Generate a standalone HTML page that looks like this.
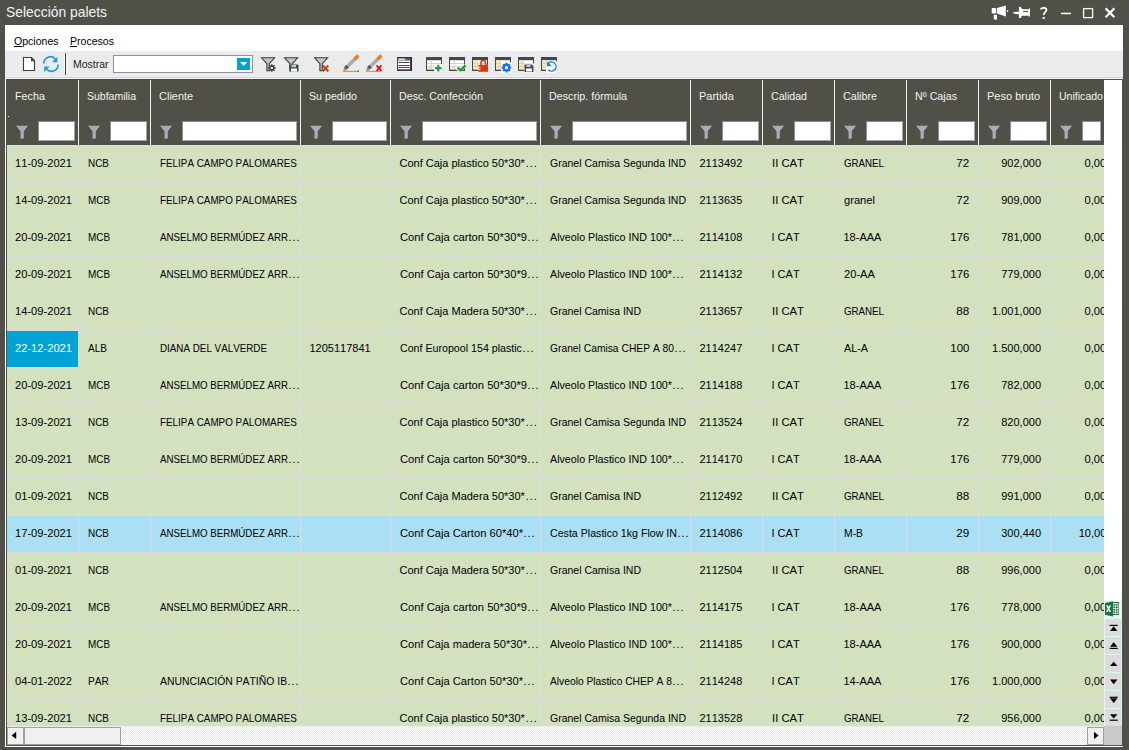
<!DOCTYPE html><html><head><meta charset="utf-8"><title>Selección palets</title><style>
*{margin:0;padding:0;box-sizing:border-box}
html,body{width:1129px;height:750px;overflow:hidden;background:#505049;font-family:"Liberation Sans",sans-serif;font-size:11px;color:#000;font-kerning:none}
.a{position:absolute}
.t{position:absolute;white-space:nowrap;line-height:13px;height:13px}
#title{left:6px;top:2px;font-size:15px;color:#f4f4f4;line-height:20px;white-space:nowrap}
#panel{left:5px;top:25px;width:1118px;height:722px;background:#fff}
.hsep{top:80px;width:1px;height:65px;background:#f2f2f2}
.htxt{color:#f2f2f2}
.tbox{top:121px;height:20px;background:#fff;border:1px solid #a6a6a6;border-top-color:#8c8c8c;border-left-color:#8c8c8c}
.row{position:absolute;left:7px;width:1097px;overflow:hidden;border-top:1px solid #dcdcdc}
.c{position:absolute;top:0;height:36px;white-space:nowrap;overflow:hidden}
.c span,.htxt span{display:inline-block}
.vs{position:absolute;top:0;width:1px;height:37px;background:#dcdcdc}
svg{position:absolute;left:0;top:0}

</style></head><body>
<div class="a" id="title"><span style="display:inline-block;transform:scaleX(0.925);transform-origin:left">Selección palets</span></div>
<div class="a" id="panel"></div>
<div class="t" style="left:13.5px;top:35px"><span style="display:inline-block;width:44.50px"><span style="display:inline-block;transform:scaleX(0.958);transform-origin:left"><u>O</u>pciones</span></span></div>
<div class="t" style="left:70px;top:35px"><span style="display:inline-block;width:44.00px"><span style="display:inline-block;transform:scaleX(0.960);transform-origin:left"><u>P</u>rocesos</span></span></div>
<div class="a" style="left:5px;top:51px;width:1118px;height:25px;background:#eaebed"></div>
<div class="a" style="left:5px;top:76px;width:1118px;height:1px;background:#eff0f1"></div>
<div class="a" style="left:5px;top:77px;width:1118px;height:1px;background:#cfcfcb"></div>
<div class="a" style="left:5px;top:78px;width:1118px;height:1px;background:#f4f5f6"></div>
<div class="a" style="left:64px;top:53px;width:3px;height:22px;background:#f8f8f8"></div>
<div class="a" style="left:65px;top:53px;width:1px;height:22px;background:#3c3c3c"></div>
<div class="t" style="left:73px;top:58px;color:#1e1e1e"><span style="display:inline-block;width:35.50px"><span style="display:inline-block;transform:scaleX(0.952);transform-origin:left">Mostrar</span></span></div>
<div class="a" style="left:113px;top:55px;width:140px;height:18px;background:#fff;border:1px solid #8f909c"></div>
<div class="a" style="left:237px;top:58px;width:13px;height:12px;background:#00a3d3"></div>
<div class="a" style="left:6px;top:79px;width:1117px;height:667px;background:#505049"></div>
<div class="a" style="left:6px;top:79px;width:1098px;height:66px;background:#505048"></div>
<div class="a" style="left:6px;top:79px;width:1098px;height:1px;background:#46463f"></div>
<div class="a" style="left:1104px;top:80px;width:18px;height:646px;background:#fff"></div>
<div class="a" style="left:8px;top:116px;width:1px;height:1px;background:#e8e8e8"></div>
<div class="t htxt" style="left:15px;top:90px"><span style="display:inline-block;width:30.00px"><span style="display:inline-block;transform:scaleX(0.981);transform-origin:left">Fecha</span></span></div>
<div class="a tbox" style="left:38px;width:37px"></div>
<div class="a hsep" style="left:78px"></div>
<div class="t htxt" style="left:87px;top:90px"><span style="display:inline-block;width:49.00px"><span style="display:inline-block;transform:scaleX(0.954);transform-origin:left">Subfamilia</span></span></div>
<div class="a tbox" style="left:110px;width:37px"></div>
<div class="a hsep" style="left:150px"></div>
<div class="t htxt" style="left:159px;top:90px">Cliente</div>
<div class="a tbox" style="left:182px;width:115px"></div>
<div class="a hsep" style="left:300px"></div>
<div class="t htxt" style="left:309px;top:90px"><span style="display:inline-block;width:48.00px"><span style="display:inline-block;transform:scaleX(0.969);transform-origin:left">Su pedido</span></span></div>
<div class="a tbox" style="left:332px;width:55px"></div>
<div class="a hsep" style="left:390px"></div>
<div class="t htxt" style="left:399px;top:90px"><span style="display:inline-block;width:84.00px"><span style="display:inline-block;transform:scaleX(0.974);transform-origin:left">Desc. Confección</span></span></div>
<div class="a tbox" style="left:422px;width:115px"></div>
<div class="a hsep" style="left:540px"></div>
<div class="t htxt" style="left:549px;top:90px"><span style="display:inline-block;width:78.00px"><span style="display:inline-block;transform:scaleX(0.974);transform-origin:left">Descrip. fórmula</span></span></div>
<div class="a tbox" style="left:572px;width:115px"></div>
<div class="a hsep" style="left:690px"></div>
<div class="t htxt" style="left:699px;top:90px">Partida</div>
<div class="a tbox" style="left:722px;width:37px"></div>
<div class="a hsep" style="left:762px"></div>
<div class="t htxt" style="left:771px;top:90px"><span style="display:inline-block;width:36.00px"><span style="display:inline-block;transform:scaleX(0.965);transform-origin:left">Calidad</span></span></div>
<div class="a tbox" style="left:794px;width:37px"></div>
<div class="a hsep" style="left:834px"></div>
<div class="t htxt" style="left:843px;top:90px"><span style="display:inline-block;width:34.00px"><span style="display:inline-block;transform:scaleX(0.976);transform-origin:left">Calibre</span></span></div>
<div class="a tbox" style="left:866px;width:37px"></div>
<div class="a hsep" style="left:906px"></div>
<div class="t htxt" style="left:915px;top:90px"><span style="display:inline-block;width:42.00px"><span style="display:inline-block;transform:scaleX(0.974);transform-origin:left">Nº Cajas</span></span></div>
<div class="a tbox" style="left:938px;width:37px"></div>
<div class="a hsep" style="left:978px"></div>
<div class="t htxt" style="left:987px;top:90px">Peso bruto</div>
<div class="a tbox" style="left:1010px;width:37px"></div>
<div class="a hsep" style="left:1050px"></div>
<div class="t htxt" style="left:1059px;top:90px"><span style="display:inline-block;width:44.00px"><span style="display:inline-block;transform:scaleX(0.959);transform-origin:left">Unificado</span></span></div>
<div class="a tbox" style="left:1082px;width:19px"></div>
<div class="a" style="left:1104px;top:80px;width:18px;height:65px;background:#fff"></div>
<div class="row" style="top:145px;height:37px;background:#d3e1bf">
<div class="c" style="left:0px;width:71px;"><div class="t" style="left:8px;top:11px"><span style="display:inline-block;width:57.00px"><span style="display:inline-block;transform:scaleX(1.013);transform-origin:left">11-09-2021</span></span></div></div>
<div class="vs" style="left:71px"></div>
<div class="c" style="left:72px;width:71px;"><div class="t" style="left:8.5px;top:11px"><span style="display:inline-block;width:21.00px"><span style="display:inline-block;transform:scaleX(0.904);transform-origin:left">NCB</span></span></div></div>
<div class="vs" style="left:143px"></div>
<div class="c" style="left:144px;width:149px;"><div class="t" style="left:8.5px;top:11px"><span style="display:inline-block;width:137.00px"><span style="display:inline-block;transform:scaleX(0.896);transform-origin:left">FELIPA CAMPO PALOMARES</span></span></div></div>
<div class="vs" style="left:293px"></div>
<div class="c" style="left:294px;width:89px;"></div>
<div class="vs" style="left:383px"></div>
<div class="c" style="left:384px;width:149px;"><div class="t" style="left:8.5px;top:11px">Conf Caja plastico 50*30*<span style="display:inline-block;margin-left:1px;letter-spacing:0.9px">...</span></div></div>
<div class="vs" style="left:533px"></div>
<div class="c" style="left:534px;width:149px;"><div class="t" style="left:8.5px;top:11px"><span style="display:inline-block;width:136.00px"><span style="display:inline-block;transform:scaleX(0.955);transform-origin:left">Granel Camisa Segunda IND</span></span></div></div>
<div class="vs" style="left:683px"></div>
<div class="c" style="left:684px;width:71px;"><div class="t" style="left:8.5px;top:11px">2113492</div></div>
<div class="vs" style="left:755px"></div>
<div class="c" style="left:756px;width:71px;"><div class="t" style="left:8.5px;top:11px"><span style="display:inline-block;width:32.00px"><span style="display:inline-block;transform:scaleX(1.027);transform-origin:left">II CAT</span></span></div></div>
<div class="vs" style="left:827px"></div>
<div class="c" style="left:828px;width:71px;"><div class="t" style="left:8.5px;top:11px"><span style="display:inline-block;width:40.00px"><span style="display:inline-block;transform:scaleX(0.884);transform-origin:left">GRANEL</span></span></div></div>
<div class="vs" style="left:899px"></div>
<div class="c" style="left:900px;width:71px;"><div class="t" style="right:9px;top:11px"><span style="display:inline-block;transform:scaleX(1.062);transform-origin:right">72</span></div></div>
<div class="vs" style="left:971px"></div>
<div class="c" style="left:972px;width:71px;"><div class="t" style="right:9px;top:11px">902,000</div></div>
<div class="vs" style="left:1043px"></div>
<div class="c" style="left:1044px;width:71px;"><div class="t" style="right:9px;top:11px"><span style="display:inline-block;transform:scaleX(1.017);transform-origin:right">0,000</span></div></div>
</div>
<div class="row" style="top:182px;height:37px;background:#d3e1bf">
<div class="c" style="left:0px;width:71px;"><div class="t" style="left:8px;top:11px"><span style="display:inline-block;width:57.00px"><span style="display:inline-block;transform:scaleX(1.013);transform-origin:left">14-09-2021</span></span></div></div>
<div class="vs" style="left:71px"></div>
<div class="c" style="left:72px;width:71px;"><div class="t" style="left:8.5px;top:11px"><span style="display:inline-block;width:22.00px"><span style="display:inline-block;transform:scaleX(0.900);transform-origin:left">MCB</span></span></div></div>
<div class="vs" style="left:143px"></div>
<div class="c" style="left:144px;width:149px;"><div class="t" style="left:8.5px;top:11px"><span style="display:inline-block;width:137.00px"><span style="display:inline-block;transform:scaleX(0.896);transform-origin:left">FELIPA CAMPO PALOMARES</span></span></div></div>
<div class="vs" style="left:293px"></div>
<div class="c" style="left:294px;width:89px;"></div>
<div class="vs" style="left:383px"></div>
<div class="c" style="left:384px;width:149px;"><div class="t" style="left:8.5px;top:11px">Conf Caja plastico 50*30*<span style="display:inline-block;margin-left:1px;letter-spacing:0.9px">...</span></div></div>
<div class="vs" style="left:533px"></div>
<div class="c" style="left:534px;width:149px;"><div class="t" style="left:8.5px;top:11px"><span style="display:inline-block;width:136.00px"><span style="display:inline-block;transform:scaleX(0.955);transform-origin:left">Granel Camisa Segunda IND</span></span></div></div>
<div class="vs" style="left:683px"></div>
<div class="c" style="left:684px;width:71px;"><div class="t" style="left:8.5px;top:11px">2113635</div></div>
<div class="vs" style="left:755px"></div>
<div class="c" style="left:756px;width:71px;"><div class="t" style="left:8.5px;top:11px"><span style="display:inline-block;width:32.00px"><span style="display:inline-block;transform:scaleX(1.027);transform-origin:left">II CAT</span></span></div></div>
<div class="vs" style="left:827px"></div>
<div class="c" style="left:828px;width:71px;"><div class="t" style="left:8.5px;top:11px"><span style="display:inline-block;width:31.00px"><span style="display:inline-block;transform:scaleX(1.014);transform-origin:left">granel</span></span></div></div>
<div class="vs" style="left:899px"></div>
<div class="c" style="left:900px;width:71px;"><div class="t" style="right:9px;top:11px"><span style="display:inline-block;transform:scaleX(1.062);transform-origin:right">72</span></div></div>
<div class="vs" style="left:971px"></div>
<div class="c" style="left:972px;width:71px;"><div class="t" style="right:9px;top:11px">909,000</div></div>
<div class="vs" style="left:1043px"></div>
<div class="c" style="left:1044px;width:71px;"><div class="t" style="right:9px;top:11px"><span style="display:inline-block;transform:scaleX(1.017);transform-origin:right">0,000</span></div></div>
</div>
<div class="row" style="top:219px;height:37px;background:#d3e1bf">
<div class="c" style="left:0px;width:71px;"><div class="t" style="left:8px;top:11px"><span style="display:inline-block;width:57.00px"><span style="display:inline-block;transform:scaleX(1.013);transform-origin:left">20-09-2021</span></span></div></div>
<div class="vs" style="left:71px"></div>
<div class="c" style="left:72px;width:71px;"><div class="t" style="left:8.5px;top:11px"><span style="display:inline-block;width:22.00px"><span style="display:inline-block;transform:scaleX(0.900);transform-origin:left">MCB</span></span></div></div>
<div class="vs" style="left:143px"></div>
<div class="c" style="left:144px;width:149px;"><div class="t" style="left:8.5px;top:11px"><span style="display:inline-block;width:128.00px"><span style="display:inline-block;transform:scaleX(0.884);transform-origin:left">ANSELMO BERMÚDEZ ARR</span></span><span style="display:inline-block;margin-left:1px;letter-spacing:0.9px">...</span></div></div>
<div class="vs" style="left:293px"></div>
<div class="c" style="left:294px;width:89px;"></div>
<div class="vs" style="left:383px"></div>
<div class="c" style="left:384px;width:149px;"><div class="t" style="left:8.5px;top:11px"><span style="display:inline-block;width:127.00px"><span style="display:inline-block;transform:scaleX(1.018);transform-origin:left">Conf Caja carton 50*30*9</span></span><span style="display:inline-block;margin-left:1px;letter-spacing:0.9px">...</span></div></div>
<div class="vs" style="left:533px"></div>
<div class="c" style="left:534px;width:149px;"><div class="t" style="left:8.5px;top:11px"><span style="display:inline-block;width:122.00px"><span style="display:inline-block;transform:scaleX(0.973);transform-origin:left">Alveolo Plastico IND 100*</span></span><span style="display:inline-block;margin-left:1px;letter-spacing:0.9px">...</span></div></div>
<div class="vs" style="left:683px"></div>
<div class="c" style="left:684px;width:71px;"><div class="t" style="left:8.5px;top:11px">2114108</div></div>
<div class="vs" style="left:755px"></div>
<div class="c" style="left:756px;width:71px;"><div class="t" style="left:8.5px;top:11px">I CAT</div></div>
<div class="vs" style="left:827px"></div>
<div class="c" style="left:828px;width:71px;"><div class="t" style="left:8.5px;top:11px">18-AAA</div></div>
<div class="vs" style="left:899px"></div>
<div class="c" style="left:900px;width:71px;"><div class="t" style="right:9px;top:11px"><span style="display:inline-block;transform:scaleX(1.035);transform-origin:right">176</span></div></div>
<div class="vs" style="left:971px"></div>
<div class="c" style="left:972px;width:71px;"><div class="t" style="right:9px;top:11px">781,000</div></div>
<div class="vs" style="left:1043px"></div>
<div class="c" style="left:1044px;width:71px;"><div class="t" style="right:9px;top:11px"><span style="display:inline-block;transform:scaleX(1.017);transform-origin:right">0,000</span></div></div>
</div>
<div class="row" style="top:256px;height:37px;background:#d3e1bf">
<div class="c" style="left:0px;width:71px;"><div class="t" style="left:8px;top:11px"><span style="display:inline-block;width:57.00px"><span style="display:inline-block;transform:scaleX(1.013);transform-origin:left">20-09-2021</span></span></div></div>
<div class="vs" style="left:71px"></div>
<div class="c" style="left:72px;width:71px;"><div class="t" style="left:8.5px;top:11px"><span style="display:inline-block;width:22.00px"><span style="display:inline-block;transform:scaleX(0.900);transform-origin:left">MCB</span></span></div></div>
<div class="vs" style="left:143px"></div>
<div class="c" style="left:144px;width:149px;"><div class="t" style="left:8.5px;top:11px"><span style="display:inline-block;width:128.00px"><span style="display:inline-block;transform:scaleX(0.884);transform-origin:left">ANSELMO BERMÚDEZ ARR</span></span><span style="display:inline-block;margin-left:1px;letter-spacing:0.9px">...</span></div></div>
<div class="vs" style="left:293px"></div>
<div class="c" style="left:294px;width:89px;"></div>
<div class="vs" style="left:383px"></div>
<div class="c" style="left:384px;width:149px;"><div class="t" style="left:8.5px;top:11px"><span style="display:inline-block;width:127.00px"><span style="display:inline-block;transform:scaleX(1.018);transform-origin:left">Conf Caja carton 50*30*9</span></span><span style="display:inline-block;margin-left:1px;letter-spacing:0.9px">...</span></div></div>
<div class="vs" style="left:533px"></div>
<div class="c" style="left:534px;width:149px;"><div class="t" style="left:8.5px;top:11px"><span style="display:inline-block;width:122.00px"><span style="display:inline-block;transform:scaleX(0.973);transform-origin:left">Alveolo Plastico IND 100*</span></span><span style="display:inline-block;margin-left:1px;letter-spacing:0.9px">...</span></div></div>
<div class="vs" style="left:683px"></div>
<div class="c" style="left:684px;width:71px;"><div class="t" style="left:8.5px;top:11px">2114132</div></div>
<div class="vs" style="left:755px"></div>
<div class="c" style="left:756px;width:71px;"><div class="t" style="left:8.5px;top:11px">I CAT</div></div>
<div class="vs" style="left:827px"></div>
<div class="c" style="left:828px;width:71px;"><div class="t" style="left:8.5px;top:11px"><span style="display:inline-block;width:31.00px"><span style="display:inline-block;transform:scaleX(1.014);transform-origin:left">20-AA</span></span></div></div>
<div class="vs" style="left:899px"></div>
<div class="c" style="left:900px;width:71px;"><div class="t" style="right:9px;top:11px"><span style="display:inline-block;transform:scaleX(1.035);transform-origin:right">176</span></div></div>
<div class="vs" style="left:971px"></div>
<div class="c" style="left:972px;width:71px;"><div class="t" style="right:9px;top:11px">779,000</div></div>
<div class="vs" style="left:1043px"></div>
<div class="c" style="left:1044px;width:71px;"><div class="t" style="right:9px;top:11px"><span style="display:inline-block;transform:scaleX(1.017);transform-origin:right">0,000</span></div></div>
</div>
<div class="row" style="top:293px;height:37px;background:#d3e1bf">
<div class="c" style="left:0px;width:71px;"><div class="t" style="left:8px;top:11px"><span style="display:inline-block;width:57.00px"><span style="display:inline-block;transform:scaleX(1.013);transform-origin:left">14-09-2021</span></span></div></div>
<div class="vs" style="left:71px"></div>
<div class="c" style="left:72px;width:71px;"><div class="t" style="left:8.5px;top:11px"><span style="display:inline-block;width:21.00px"><span style="display:inline-block;transform:scaleX(0.904);transform-origin:left">NCB</span></span></div></div>
<div class="vs" style="left:143px"></div>
<div class="c" style="left:144px;width:149px;"></div>
<div class="vs" style="left:293px"></div>
<div class="c" style="left:294px;width:89px;"></div>
<div class="vs" style="left:383px"></div>
<div class="c" style="left:384px;width:149px;"><div class="t" style="left:8.5px;top:11px">Conf Caja Madera 50*30*<span style="display:inline-block;margin-left:1px;letter-spacing:0.9px">...</span></div></div>
<div class="vs" style="left:533px"></div>
<div class="c" style="left:534px;width:149px;"><div class="t" style="left:8.5px;top:11px"><span style="display:inline-block;width:91.00px"><span style="display:inline-block;transform:scaleX(0.954);transform-origin:left">Granel Camisa IND</span></span></div></div>
<div class="vs" style="left:683px"></div>
<div class="c" style="left:684px;width:71px;"><div class="t" style="left:8.5px;top:11px">2113657</div></div>
<div class="vs" style="left:755px"></div>
<div class="c" style="left:756px;width:71px;"><div class="t" style="left:8.5px;top:11px"><span style="display:inline-block;width:32.00px"><span style="display:inline-block;transform:scaleX(1.027);transform-origin:left">II CAT</span></span></div></div>
<div class="vs" style="left:827px"></div>
<div class="c" style="left:828px;width:71px;"><div class="t" style="left:8.5px;top:11px"><span style="display:inline-block;width:40.00px"><span style="display:inline-block;transform:scaleX(0.884);transform-origin:left">GRANEL</span></span></div></div>
<div class="vs" style="left:899px"></div>
<div class="c" style="left:900px;width:71px;"><div class="t" style="right:9px;top:11px"><span style="display:inline-block;transform:scaleX(1.062);transform-origin:right">88</span></div></div>
<div class="vs" style="left:971px"></div>
<div class="c" style="left:972px;width:71px;"><div class="t" style="right:9px;top:11px">1.001,000</div></div>
<div class="vs" style="left:1043px"></div>
<div class="c" style="left:1044px;width:71px;"><div class="t" style="right:9px;top:11px"><span style="display:inline-block;transform:scaleX(1.017);transform-origin:right">0,000</span></div></div>
</div>
<div class="row" style="top:330px;height:37px;background:#d3e1bf">
<div class="c" style="left:0px;width:71px;background:#00a3d3;color:#fff;"><div class="t" style="left:8px;top:11px"><span style="display:inline-block;width:57.00px"><span style="display:inline-block;transform:scaleX(1.013);transform-origin:left">22-12-2021</span></span></div></div>
<div class="vs" style="left:71px"></div>
<div class="c" style="left:72px;width:71px;"><div class="t" style="left:8.5px;top:11px"><span style="display:inline-block;width:19.00px"><span style="display:inline-block;transform:scaleX(0.914);transform-origin:left">ALB</span></span></div></div>
<div class="vs" style="left:143px"></div>
<div class="c" style="left:144px;width:149px;"><div class="t" style="left:8.5px;top:11px"><span style="display:inline-block;width:107.00px"><span style="display:inline-block;transform:scaleX(0.893);transform-origin:left">DIANA DEL VALVERDE</span></span></div></div>
<div class="vs" style="left:293px"></div>
<div class="c" style="left:294px;width:89px;"><div class="t" style="left:8.5px;top:11px">1205117841</div></div>
<div class="vs" style="left:383px"></div>
<div class="c" style="left:384px;width:149px;"><div class="t" style="left:8.5px;top:11px"><span style="display:inline-block;width:122.00px"><span style="display:inline-block;transform:scaleX(0.968);transform-origin:left">Conf Europool 154 plastic</span></span><span style="display:inline-block;margin-left:1px;letter-spacing:0.9px">...</span></div></div>
<div class="vs" style="left:533px"></div>
<div class="c" style="left:534px;width:149px;"><div class="t" style="left:8.5px;top:11px"><span style="display:inline-block;width:124.00px"><span style="display:inline-block;transform:scaleX(0.935);transform-origin:left">Granel Camisa CHEP A 80</span></span><span style="display:inline-block;margin-left:1px;letter-spacing:0.9px">...</span></div></div>
<div class="vs" style="left:683px"></div>
<div class="c" style="left:684px;width:71px;"><div class="t" style="left:8.5px;top:11px">2114247</div></div>
<div class="vs" style="left:755px"></div>
<div class="c" style="left:756px;width:71px;"><div class="t" style="left:8.5px;top:11px">I CAT</div></div>
<div class="vs" style="left:827px"></div>
<div class="c" style="left:828px;width:71px;"><div class="t" style="left:8.5px;top:11px"><span style="display:inline-block;width:24.00px"><span style="display:inline-block;transform:scaleX(0.981);transform-origin:left">AL-A</span></span></div></div>
<div class="vs" style="left:899px"></div>
<div class="c" style="left:900px;width:71px;"><div class="t" style="right:9px;top:11px"><span style="display:inline-block;transform:scaleX(1.035);transform-origin:right">100</span></div></div>
<div class="vs" style="left:971px"></div>
<div class="c" style="left:972px;width:71px;"><div class="t" style="right:9px;top:11px">1.500,000</div></div>
<div class="vs" style="left:1043px"></div>
<div class="c" style="left:1044px;width:71px;"><div class="t" style="right:9px;top:11px"><span style="display:inline-block;transform:scaleX(1.017);transform-origin:right">0,000</span></div></div>
</div>
<div class="row" style="top:367px;height:37px;background:#d3e1bf">
<div class="c" style="left:0px;width:71px;"><div class="t" style="left:8px;top:11px"><span style="display:inline-block;width:57.00px"><span style="display:inline-block;transform:scaleX(1.013);transform-origin:left">20-09-2021</span></span></div></div>
<div class="vs" style="left:71px"></div>
<div class="c" style="left:72px;width:71px;"><div class="t" style="left:8.5px;top:11px"><span style="display:inline-block;width:22.00px"><span style="display:inline-block;transform:scaleX(0.900);transform-origin:left">MCB</span></span></div></div>
<div class="vs" style="left:143px"></div>
<div class="c" style="left:144px;width:149px;"><div class="t" style="left:8.5px;top:11px"><span style="display:inline-block;width:128.00px"><span style="display:inline-block;transform:scaleX(0.884);transform-origin:left">ANSELMO BERMÚDEZ ARR</span></span><span style="display:inline-block;margin-left:1px;letter-spacing:0.9px">...</span></div></div>
<div class="vs" style="left:293px"></div>
<div class="c" style="left:294px;width:89px;"></div>
<div class="vs" style="left:383px"></div>
<div class="c" style="left:384px;width:149px;"><div class="t" style="left:8.5px;top:11px"><span style="display:inline-block;width:127.00px"><span style="display:inline-block;transform:scaleX(1.018);transform-origin:left">Conf Caja carton 50*30*9</span></span><span style="display:inline-block;margin-left:1px;letter-spacing:0.9px">...</span></div></div>
<div class="vs" style="left:533px"></div>
<div class="c" style="left:534px;width:149px;"><div class="t" style="left:8.5px;top:11px"><span style="display:inline-block;width:122.00px"><span style="display:inline-block;transform:scaleX(0.973);transform-origin:left">Alveolo Plastico IND 100*</span></span><span style="display:inline-block;margin-left:1px;letter-spacing:0.9px">...</span></div></div>
<div class="vs" style="left:683px"></div>
<div class="c" style="left:684px;width:71px;"><div class="t" style="left:8.5px;top:11px">2114188</div></div>
<div class="vs" style="left:755px"></div>
<div class="c" style="left:756px;width:71px;"><div class="t" style="left:8.5px;top:11px">I CAT</div></div>
<div class="vs" style="left:827px"></div>
<div class="c" style="left:828px;width:71px;"><div class="t" style="left:8.5px;top:11px">18-AAA</div></div>
<div class="vs" style="left:899px"></div>
<div class="c" style="left:900px;width:71px;"><div class="t" style="right:9px;top:11px"><span style="display:inline-block;transform:scaleX(1.035);transform-origin:right">176</span></div></div>
<div class="vs" style="left:971px"></div>
<div class="c" style="left:972px;width:71px;"><div class="t" style="right:9px;top:11px">782,000</div></div>
<div class="vs" style="left:1043px"></div>
<div class="c" style="left:1044px;width:71px;"><div class="t" style="right:9px;top:11px"><span style="display:inline-block;transform:scaleX(1.017);transform-origin:right">0,000</span></div></div>
</div>
<div class="row" style="top:404px;height:37px;background:#d3e1bf">
<div class="c" style="left:0px;width:71px;"><div class="t" style="left:8px;top:11px"><span style="display:inline-block;width:57.00px"><span style="display:inline-block;transform:scaleX(1.013);transform-origin:left">13-09-2021</span></span></div></div>
<div class="vs" style="left:71px"></div>
<div class="c" style="left:72px;width:71px;"><div class="t" style="left:8.5px;top:11px"><span style="display:inline-block;width:21.00px"><span style="display:inline-block;transform:scaleX(0.904);transform-origin:left">NCB</span></span></div></div>
<div class="vs" style="left:143px"></div>
<div class="c" style="left:144px;width:149px;"><div class="t" style="left:8.5px;top:11px"><span style="display:inline-block;width:137.00px"><span style="display:inline-block;transform:scaleX(0.896);transform-origin:left">FELIPA CAMPO PALOMARES</span></span></div></div>
<div class="vs" style="left:293px"></div>
<div class="c" style="left:294px;width:89px;"></div>
<div class="vs" style="left:383px"></div>
<div class="c" style="left:384px;width:149px;"><div class="t" style="left:8.5px;top:11px">Conf Caja plastico 50*30*<span style="display:inline-block;margin-left:1px;letter-spacing:0.9px">...</span></div></div>
<div class="vs" style="left:533px"></div>
<div class="c" style="left:534px;width:149px;"><div class="t" style="left:8.5px;top:11px"><span style="display:inline-block;width:136.00px"><span style="display:inline-block;transform:scaleX(0.955);transform-origin:left">Granel Camisa Segunda IND</span></span></div></div>
<div class="vs" style="left:683px"></div>
<div class="c" style="left:684px;width:71px;"><div class="t" style="left:8.5px;top:11px">2113524</div></div>
<div class="vs" style="left:755px"></div>
<div class="c" style="left:756px;width:71px;"><div class="t" style="left:8.5px;top:11px"><span style="display:inline-block;width:32.00px"><span style="display:inline-block;transform:scaleX(1.027);transform-origin:left">II CAT</span></span></div></div>
<div class="vs" style="left:827px"></div>
<div class="c" style="left:828px;width:71px;"><div class="t" style="left:8.5px;top:11px"><span style="display:inline-block;width:40.00px"><span style="display:inline-block;transform:scaleX(0.884);transform-origin:left">GRANEL</span></span></div></div>
<div class="vs" style="left:899px"></div>
<div class="c" style="left:900px;width:71px;"><div class="t" style="right:9px;top:11px"><span style="display:inline-block;transform:scaleX(1.062);transform-origin:right">72</span></div></div>
<div class="vs" style="left:971px"></div>
<div class="c" style="left:972px;width:71px;"><div class="t" style="right:9px;top:11px">820,000</div></div>
<div class="vs" style="left:1043px"></div>
<div class="c" style="left:1044px;width:71px;"><div class="t" style="right:9px;top:11px"><span style="display:inline-block;transform:scaleX(1.017);transform-origin:right">0,000</span></div></div>
</div>
<div class="row" style="top:441px;height:37px;background:#d3e1bf">
<div class="c" style="left:0px;width:71px;"><div class="t" style="left:8px;top:11px"><span style="display:inline-block;width:57.00px"><span style="display:inline-block;transform:scaleX(1.013);transform-origin:left">20-09-2021</span></span></div></div>
<div class="vs" style="left:71px"></div>
<div class="c" style="left:72px;width:71px;"><div class="t" style="left:8.5px;top:11px"><span style="display:inline-block;width:22.00px"><span style="display:inline-block;transform:scaleX(0.900);transform-origin:left">MCB</span></span></div></div>
<div class="vs" style="left:143px"></div>
<div class="c" style="left:144px;width:149px;"><div class="t" style="left:8.5px;top:11px"><span style="display:inline-block;width:128.00px"><span style="display:inline-block;transform:scaleX(0.884);transform-origin:left">ANSELMO BERMÚDEZ ARR</span></span><span style="display:inline-block;margin-left:1px;letter-spacing:0.9px">...</span></div></div>
<div class="vs" style="left:293px"></div>
<div class="c" style="left:294px;width:89px;"></div>
<div class="vs" style="left:383px"></div>
<div class="c" style="left:384px;width:149px;"><div class="t" style="left:8.5px;top:11px"><span style="display:inline-block;width:127.00px"><span style="display:inline-block;transform:scaleX(1.018);transform-origin:left">Conf Caja carton 50*30*9</span></span><span style="display:inline-block;margin-left:1px;letter-spacing:0.9px">...</span></div></div>
<div class="vs" style="left:533px"></div>
<div class="c" style="left:534px;width:149px;"><div class="t" style="left:8.5px;top:11px"><span style="display:inline-block;width:122.00px"><span style="display:inline-block;transform:scaleX(0.973);transform-origin:left">Alveolo Plastico IND 100*</span></span><span style="display:inline-block;margin-left:1px;letter-spacing:0.9px">...</span></div></div>
<div class="vs" style="left:683px"></div>
<div class="c" style="left:684px;width:71px;"><div class="t" style="left:8.5px;top:11px">2114170</div></div>
<div class="vs" style="left:755px"></div>
<div class="c" style="left:756px;width:71px;"><div class="t" style="left:8.5px;top:11px">I CAT</div></div>
<div class="vs" style="left:827px"></div>
<div class="c" style="left:828px;width:71px;"><div class="t" style="left:8.5px;top:11px">18-AAA</div></div>
<div class="vs" style="left:899px"></div>
<div class="c" style="left:900px;width:71px;"><div class="t" style="right:9px;top:11px"><span style="display:inline-block;transform:scaleX(1.035);transform-origin:right">176</span></div></div>
<div class="vs" style="left:971px"></div>
<div class="c" style="left:972px;width:71px;"><div class="t" style="right:9px;top:11px">779,000</div></div>
<div class="vs" style="left:1043px"></div>
<div class="c" style="left:1044px;width:71px;"><div class="t" style="right:9px;top:11px"><span style="display:inline-block;transform:scaleX(1.017);transform-origin:right">0,000</span></div></div>
</div>
<div class="row" style="top:478px;height:37px;background:#d3e1bf">
<div class="c" style="left:0px;width:71px;"><div class="t" style="left:8px;top:11px"><span style="display:inline-block;width:57.00px"><span style="display:inline-block;transform:scaleX(1.013);transform-origin:left">01-09-2021</span></span></div></div>
<div class="vs" style="left:71px"></div>
<div class="c" style="left:72px;width:71px;"><div class="t" style="left:8.5px;top:11px"><span style="display:inline-block;width:21.00px"><span style="display:inline-block;transform:scaleX(0.904);transform-origin:left">NCB</span></span></div></div>
<div class="vs" style="left:143px"></div>
<div class="c" style="left:144px;width:149px;"></div>
<div class="vs" style="left:293px"></div>
<div class="c" style="left:294px;width:89px;"></div>
<div class="vs" style="left:383px"></div>
<div class="c" style="left:384px;width:149px;"><div class="t" style="left:8.5px;top:11px">Conf Caja Madera 50*30*<span style="display:inline-block;margin-left:1px;letter-spacing:0.9px">...</span></div></div>
<div class="vs" style="left:533px"></div>
<div class="c" style="left:534px;width:149px;"><div class="t" style="left:8.5px;top:11px"><span style="display:inline-block;width:91.00px"><span style="display:inline-block;transform:scaleX(0.954);transform-origin:left">Granel Camisa IND</span></span></div></div>
<div class="vs" style="left:683px"></div>
<div class="c" style="left:684px;width:71px;"><div class="t" style="left:8.5px;top:11px">2112492</div></div>
<div class="vs" style="left:755px"></div>
<div class="c" style="left:756px;width:71px;"><div class="t" style="left:8.5px;top:11px"><span style="display:inline-block;width:32.00px"><span style="display:inline-block;transform:scaleX(1.027);transform-origin:left">II CAT</span></span></div></div>
<div class="vs" style="left:827px"></div>
<div class="c" style="left:828px;width:71px;"><div class="t" style="left:8.5px;top:11px"><span style="display:inline-block;width:40.00px"><span style="display:inline-block;transform:scaleX(0.884);transform-origin:left">GRANEL</span></span></div></div>
<div class="vs" style="left:899px"></div>
<div class="c" style="left:900px;width:71px;"><div class="t" style="right:9px;top:11px"><span style="display:inline-block;transform:scaleX(1.062);transform-origin:right">88</span></div></div>
<div class="vs" style="left:971px"></div>
<div class="c" style="left:972px;width:71px;"><div class="t" style="right:9px;top:11px">991,000</div></div>
<div class="vs" style="left:1043px"></div>
<div class="c" style="left:1044px;width:71px;"><div class="t" style="right:9px;top:11px"><span style="display:inline-block;transform:scaleX(1.017);transform-origin:right">0,000</span></div></div>
</div>
<div class="row" style="top:515px;height:37px;background:#abdff3">
<div class="c" style="left:0px;width:71px;"><div class="t" style="left:8px;top:11px"><span style="display:inline-block;width:57.00px"><span style="display:inline-block;transform:scaleX(1.013);transform-origin:left">17-09-2021</span></span></div></div>
<div class="vs" style="left:71px"></div>
<div class="c" style="left:72px;width:71px;"><div class="t" style="left:8.5px;top:11px"><span style="display:inline-block;width:21.00px"><span style="display:inline-block;transform:scaleX(0.904);transform-origin:left">NCB</span></span></div></div>
<div class="vs" style="left:143px"></div>
<div class="c" style="left:144px;width:149px;"><div class="t" style="left:8.5px;top:11px"><span style="display:inline-block;width:128.00px"><span style="display:inline-block;transform:scaleX(0.884);transform-origin:left">ANSELMO BERMÚDEZ ARR</span></span><span style="display:inline-block;margin-left:1px;letter-spacing:0.9px">...</span></div></div>
<div class="vs" style="left:293px"></div>
<div class="c" style="left:294px;width:89px;"></div>
<div class="vs" style="left:383px"></div>
<div class="c" style="left:384px;width:149px;"><div class="t" style="left:8.5px;top:11px"><span style="display:inline-block;width:123.00px"><span style="display:inline-block;transform:scaleX(1.016);transform-origin:left">Conf Caja Carton 60*40*</span></span><span style="display:inline-block;margin-left:1px;letter-spacing:0.9px">...</span></div></div>
<div class="vs" style="left:533px"></div>
<div class="c" style="left:534px;width:149px;"><div class="t" style="left:8.5px;top:11px"><span style="display:inline-block;width:127.00px"><span style="display:inline-block;transform:scaleX(0.966);transform-origin:left">Cesta Plastico 1kg Flow IN</span></span><span style="display:inline-block;margin-left:1px;letter-spacing:0.9px">...</span></div></div>
<div class="vs" style="left:683px"></div>
<div class="c" style="left:684px;width:71px;"><div class="t" style="left:8.5px;top:11px">2114086</div></div>
<div class="vs" style="left:755px"></div>
<div class="c" style="left:756px;width:71px;"><div class="t" style="left:8.5px;top:11px">I CAT</div></div>
<div class="vs" style="left:827px"></div>
<div class="c" style="left:828px;width:71px;"><div class="t" style="left:8.5px;top:11px"><span style="display:inline-block;width:19.00px"><span style="display:inline-block;transform:scaleX(0.942);transform-origin:left">M-B</span></span></div></div>
<div class="vs" style="left:899px"></div>
<div class="c" style="left:900px;width:71px;"><div class="t" style="right:9px;top:11px"><span style="display:inline-block;transform:scaleX(1.062);transform-origin:right">29</span></div></div>
<div class="vs" style="left:971px"></div>
<div class="c" style="left:972px;width:71px;"><div class="t" style="right:9px;top:11px">300,440</div></div>
<div class="vs" style="left:1043px"></div>
<div class="c" style="left:1044px;width:71px;"><div class="t" style="right:9px;top:11px"><span style="display:inline-block;transform:scaleX(1.011);transform-origin:right">10,000</span></div></div>
</div>
<div class="row" style="top:552px;height:37px;background:#d3e1bf">
<div class="c" style="left:0px;width:71px;"><div class="t" style="left:8px;top:11px"><span style="display:inline-block;width:57.00px"><span style="display:inline-block;transform:scaleX(1.013);transform-origin:left">01-09-2021</span></span></div></div>
<div class="vs" style="left:71px"></div>
<div class="c" style="left:72px;width:71px;"><div class="t" style="left:8.5px;top:11px"><span style="display:inline-block;width:21.00px"><span style="display:inline-block;transform:scaleX(0.904);transform-origin:left">NCB</span></span></div></div>
<div class="vs" style="left:143px"></div>
<div class="c" style="left:144px;width:149px;"></div>
<div class="vs" style="left:293px"></div>
<div class="c" style="left:294px;width:89px;"></div>
<div class="vs" style="left:383px"></div>
<div class="c" style="left:384px;width:149px;"><div class="t" style="left:8.5px;top:11px">Conf Caja Madera 50*30*<span style="display:inline-block;margin-left:1px;letter-spacing:0.9px">...</span></div></div>
<div class="vs" style="left:533px"></div>
<div class="c" style="left:534px;width:149px;"><div class="t" style="left:8.5px;top:11px"><span style="display:inline-block;width:91.00px"><span style="display:inline-block;transform:scaleX(0.954);transform-origin:left">Granel Camisa IND</span></span></div></div>
<div class="vs" style="left:683px"></div>
<div class="c" style="left:684px;width:71px;"><div class="t" style="left:8.5px;top:11px">2112504</div></div>
<div class="vs" style="left:755px"></div>
<div class="c" style="left:756px;width:71px;"><div class="t" style="left:8.5px;top:11px"><span style="display:inline-block;width:32.00px"><span style="display:inline-block;transform:scaleX(1.027);transform-origin:left">II CAT</span></span></div></div>
<div class="vs" style="left:827px"></div>
<div class="c" style="left:828px;width:71px;"><div class="t" style="left:8.5px;top:11px"><span style="display:inline-block;width:40.00px"><span style="display:inline-block;transform:scaleX(0.884);transform-origin:left">GRANEL</span></span></div></div>
<div class="vs" style="left:899px"></div>
<div class="c" style="left:900px;width:71px;"><div class="t" style="right:9px;top:11px"><span style="display:inline-block;transform:scaleX(1.062);transform-origin:right">88</span></div></div>
<div class="vs" style="left:971px"></div>
<div class="c" style="left:972px;width:71px;"><div class="t" style="right:9px;top:11px">996,000</div></div>
<div class="vs" style="left:1043px"></div>
<div class="c" style="left:1044px;width:71px;"><div class="t" style="right:9px;top:11px"><span style="display:inline-block;transform:scaleX(1.017);transform-origin:right">0,000</span></div></div>
</div>
<div class="row" style="top:589px;height:37px;background:#d3e1bf">
<div class="c" style="left:0px;width:71px;"><div class="t" style="left:8px;top:11px"><span style="display:inline-block;width:57.00px"><span style="display:inline-block;transform:scaleX(1.013);transform-origin:left">20-09-2021</span></span></div></div>
<div class="vs" style="left:71px"></div>
<div class="c" style="left:72px;width:71px;"><div class="t" style="left:8.5px;top:11px"><span style="display:inline-block;width:22.00px"><span style="display:inline-block;transform:scaleX(0.900);transform-origin:left">MCB</span></span></div></div>
<div class="vs" style="left:143px"></div>
<div class="c" style="left:144px;width:149px;"><div class="t" style="left:8.5px;top:11px"><span style="display:inline-block;width:128.00px"><span style="display:inline-block;transform:scaleX(0.884);transform-origin:left">ANSELMO BERMÚDEZ ARR</span></span><span style="display:inline-block;margin-left:1px;letter-spacing:0.9px">...</span></div></div>
<div class="vs" style="left:293px"></div>
<div class="c" style="left:294px;width:89px;"></div>
<div class="vs" style="left:383px"></div>
<div class="c" style="left:384px;width:149px;"><div class="t" style="left:8.5px;top:11px"><span style="display:inline-block;width:127.00px"><span style="display:inline-block;transform:scaleX(1.018);transform-origin:left">Conf Caja carton 50*30*9</span></span><span style="display:inline-block;margin-left:1px;letter-spacing:0.9px">...</span></div></div>
<div class="vs" style="left:533px"></div>
<div class="c" style="left:534px;width:149px;"><div class="t" style="left:8.5px;top:11px"><span style="display:inline-block;width:122.00px"><span style="display:inline-block;transform:scaleX(0.973);transform-origin:left">Alveolo Plastico IND 100*</span></span><span style="display:inline-block;margin-left:1px;letter-spacing:0.9px">...</span></div></div>
<div class="vs" style="left:683px"></div>
<div class="c" style="left:684px;width:71px;"><div class="t" style="left:8.5px;top:11px">2114175</div></div>
<div class="vs" style="left:755px"></div>
<div class="c" style="left:756px;width:71px;"><div class="t" style="left:8.5px;top:11px">I CAT</div></div>
<div class="vs" style="left:827px"></div>
<div class="c" style="left:828px;width:71px;"><div class="t" style="left:8.5px;top:11px">18-AAA</div></div>
<div class="vs" style="left:899px"></div>
<div class="c" style="left:900px;width:71px;"><div class="t" style="right:9px;top:11px"><span style="display:inline-block;transform:scaleX(1.035);transform-origin:right">176</span></div></div>
<div class="vs" style="left:971px"></div>
<div class="c" style="left:972px;width:71px;"><div class="t" style="right:9px;top:11px">778,000</div></div>
<div class="vs" style="left:1043px"></div>
<div class="c" style="left:1044px;width:71px;"><div class="t" style="right:9px;top:11px"><span style="display:inline-block;transform:scaleX(1.017);transform-origin:right">0,000</span></div></div>
</div>
<div class="row" style="top:626px;height:37px;background:#d3e1bf">
<div class="c" style="left:0px;width:71px;"><div class="t" style="left:8px;top:11px"><span style="display:inline-block;width:57.00px"><span style="display:inline-block;transform:scaleX(1.013);transform-origin:left">20-09-2021</span></span></div></div>
<div class="vs" style="left:71px"></div>
<div class="c" style="left:72px;width:71px;"><div class="t" style="left:8.5px;top:11px"><span style="display:inline-block;width:22.00px"><span style="display:inline-block;transform:scaleX(0.900);transform-origin:left">MCB</span></span></div></div>
<div class="vs" style="left:143px"></div>
<div class="c" style="left:144px;width:149px;"></div>
<div class="vs" style="left:293px"></div>
<div class="c" style="left:294px;width:89px;"></div>
<div class="vs" style="left:383px"></div>
<div class="c" style="left:384px;width:149px;"><div class="t" style="left:8.5px;top:11px"><span style="display:inline-block;width:127.00px"><span style="display:inline-block;transform:scaleX(1.013);transform-origin:left">Conf Caja madera 50*30*</span></span><span style="display:inline-block;margin-left:1px;letter-spacing:0.9px">...</span></div></div>
<div class="vs" style="left:533px"></div>
<div class="c" style="left:534px;width:149px;"><div class="t" style="left:8.5px;top:11px"><span style="display:inline-block;width:122.00px"><span style="display:inline-block;transform:scaleX(0.973);transform-origin:left">Alveolo Plastico IND 100*</span></span><span style="display:inline-block;margin-left:1px;letter-spacing:0.9px">...</span></div></div>
<div class="vs" style="left:683px"></div>
<div class="c" style="left:684px;width:71px;"><div class="t" style="left:8.5px;top:11px">2114185</div></div>
<div class="vs" style="left:755px"></div>
<div class="c" style="left:756px;width:71px;"><div class="t" style="left:8.5px;top:11px">I CAT</div></div>
<div class="vs" style="left:827px"></div>
<div class="c" style="left:828px;width:71px;"><div class="t" style="left:8.5px;top:11px">18-AAA</div></div>
<div class="vs" style="left:899px"></div>
<div class="c" style="left:900px;width:71px;"><div class="t" style="right:9px;top:11px"><span style="display:inline-block;transform:scaleX(1.035);transform-origin:right">176</span></div></div>
<div class="vs" style="left:971px"></div>
<div class="c" style="left:972px;width:71px;"><div class="t" style="right:9px;top:11px">900,000</div></div>
<div class="vs" style="left:1043px"></div>
<div class="c" style="left:1044px;width:71px;"><div class="t" style="right:9px;top:11px"><span style="display:inline-block;transform:scaleX(1.017);transform-origin:right">0,000</span></div></div>
</div>
<div class="row" style="top:663px;height:37px;background:#d3e1bf">
<div class="c" style="left:0px;width:71px;"><div class="t" style="left:8px;top:11px"><span style="display:inline-block;width:57.00px"><span style="display:inline-block;transform:scaleX(1.013);transform-origin:left">04-01-2022</span></span></div></div>
<div class="vs" style="left:71px"></div>
<div class="c" style="left:72px;width:71px;"><div class="t" style="left:8.5px;top:11px"><span style="display:inline-block;width:21.00px"><span style="display:inline-block;transform:scaleX(0.928);transform-origin:left">PAR</span></span></div></div>
<div class="vs" style="left:143px"></div>
<div class="c" style="left:144px;width:149px;"><div class="t" style="left:8.5px;top:11px"><span style="display:inline-block;width:127.00px"><span style="display:inline-block;transform:scaleX(0.945);transform-origin:left">ANUNCIACIÓN PATIÑO IB</span></span><span style="display:inline-block;margin-left:1px;letter-spacing:0.9px">...</span></div></div>
<div class="vs" style="left:293px"></div>
<div class="c" style="left:294px;width:89px;"></div>
<div class="vs" style="left:383px"></div>
<div class="c" style="left:384px;width:149px;"><div class="t" style="left:8.5px;top:11px"><span style="display:inline-block;width:123.00px"><span style="display:inline-block;transform:scaleX(1.016);transform-origin:left">Conf Caja Carton 50*30*</span></span><span style="display:inline-block;margin-left:1px;letter-spacing:0.9px">...</span></div></div>
<div class="vs" style="left:533px"></div>
<div class="c" style="left:534px;width:149px;"><div class="t" style="left:8.5px;top:11px"><span style="display:inline-block;width:122.00px"><span style="display:inline-block;transform:scaleX(0.932);transform-origin:left">Alveolo Plastico CHEP A 8</span></span><span style="display:inline-block;margin-left:1px;letter-spacing:0.9px">...</span></div></div>
<div class="vs" style="left:683px"></div>
<div class="c" style="left:684px;width:71px;"><div class="t" style="left:8.5px;top:11px">2114248</div></div>
<div class="vs" style="left:755px"></div>
<div class="c" style="left:756px;width:71px;"><div class="t" style="left:8.5px;top:11px">I CAT</div></div>
<div class="vs" style="left:827px"></div>
<div class="c" style="left:828px;width:71px;"><div class="t" style="left:8.5px;top:11px">14-AAA</div></div>
<div class="vs" style="left:899px"></div>
<div class="c" style="left:900px;width:71px;"><div class="t" style="right:9px;top:11px"><span style="display:inline-block;transform:scaleX(1.035);transform-origin:right">176</span></div></div>
<div class="vs" style="left:971px"></div>
<div class="c" style="left:972px;width:71px;"><div class="t" style="right:9px;top:11px">1.000,000</div></div>
<div class="vs" style="left:1043px"></div>
<div class="c" style="left:1044px;width:71px;"><div class="t" style="right:9px;top:11px"><span style="display:inline-block;transform:scaleX(1.017);transform-origin:right">0,000</span></div></div>
</div>
<div class="row" style="top:700px;height:26px;background:#d3e1bf">
<div class="c" style="left:0px;width:71px;"><div class="t" style="left:8px;top:11px"><span style="display:inline-block;width:57.00px"><span style="display:inline-block;transform:scaleX(1.013);transform-origin:left">13-09-2021</span></span></div></div>
<div class="vs" style="left:71px"></div>
<div class="c" style="left:72px;width:71px;"><div class="t" style="left:8.5px;top:11px"><span style="display:inline-block;width:21.00px"><span style="display:inline-block;transform:scaleX(0.904);transform-origin:left">NCB</span></span></div></div>
<div class="vs" style="left:143px"></div>
<div class="c" style="left:144px;width:149px;"><div class="t" style="left:8.5px;top:11px"><span style="display:inline-block;width:137.00px"><span style="display:inline-block;transform:scaleX(0.896);transform-origin:left">FELIPA CAMPO PALOMARES</span></span></div></div>
<div class="vs" style="left:293px"></div>
<div class="c" style="left:294px;width:89px;"></div>
<div class="vs" style="left:383px"></div>
<div class="c" style="left:384px;width:149px;"><div class="t" style="left:8.5px;top:11px">Conf Caja plastico 50*30*<span style="display:inline-block;margin-left:1px;letter-spacing:0.9px">...</span></div></div>
<div class="vs" style="left:533px"></div>
<div class="c" style="left:534px;width:149px;"><div class="t" style="left:8.5px;top:11px"><span style="display:inline-block;width:136.00px"><span style="display:inline-block;transform:scaleX(0.955);transform-origin:left">Granel Camisa Segunda IND</span></span></div></div>
<div class="vs" style="left:683px"></div>
<div class="c" style="left:684px;width:71px;"><div class="t" style="left:8.5px;top:11px">2113528</div></div>
<div class="vs" style="left:755px"></div>
<div class="c" style="left:756px;width:71px;"><div class="t" style="left:8.5px;top:11px"><span style="display:inline-block;width:32.00px"><span style="display:inline-block;transform:scaleX(1.027);transform-origin:left">II CAT</span></span></div></div>
<div class="vs" style="left:827px"></div>
<div class="c" style="left:828px;width:71px;"><div class="t" style="left:8.5px;top:11px"><span style="display:inline-block;width:40.00px"><span style="display:inline-block;transform:scaleX(0.884);transform-origin:left">GRANEL</span></span></div></div>
<div class="vs" style="left:899px"></div>
<div class="c" style="left:900px;width:71px;"><div class="t" style="right:9px;top:11px"><span style="display:inline-block;transform:scaleX(1.062);transform-origin:right">72</span></div></div>
<div class="vs" style="left:971px"></div>
<div class="c" style="left:972px;width:71px;"><div class="t" style="right:9px;top:11px">956,000</div></div>
<div class="vs" style="left:1043px"></div>
<div class="c" style="left:1044px;width:71px;"><div class="t" style="right:9px;top:11px"><span style="display:inline-block;transform:scaleX(1.017);transform-origin:right">0,000</span></div></div>
</div>
<div class="a" style="left:1104px;top:145px;width:18px;height:581px;background:#fff"></div>
<div class="a" style="left:1104px;top:600px;width:1px;height:126px;background:#dff3f7"></div>
<div class="a" style="left:1121px;top:600px;width:1px;height:126px;background:#dff3f7"></div>
<div class="a" style="left:1105px;top:601px;width:16px;height:17px;background:#f0eef0"></div>
<div class="a" style="left:1105px;top:619px;width:16px;height:17px;background:#dcdcdc"></div>
<div class="a" style="left:1105px;top:618px;width:16px;height:1px;background:#dff3f7"></div>
<div class="a" style="left:1105px;top:637px;width:16px;height:17px;background:#dcdcdc"></div>
<div class="a" style="left:1105px;top:636px;width:16px;height:1px;background:#dff3f7"></div>
<div class="a" style="left:1105px;top:655px;width:16px;height:17px;background:#dcdcdc"></div>
<div class="a" style="left:1105px;top:654px;width:16px;height:1px;background:#dff3f7"></div>
<div class="a" style="left:1105px;top:673px;width:16px;height:17px;background:#dcdcdc"></div>
<div class="a" style="left:1105px;top:672px;width:16px;height:1px;background:#dff3f7"></div>
<div class="a" style="left:1105px;top:691px;width:16px;height:17px;background:#dcdcdc"></div>
<div class="a" style="left:1105px;top:690px;width:16px;height:1px;background:#dff3f7"></div>
<div class="a" style="left:1105px;top:709px;width:16px;height:17px;background:#dcdcdc"></div>
<div class="a" style="left:1105px;top:708px;width:16px;height:1px;background:#dff3f7"></div>
<div class="a" style="left:7px;top:726px;width:1097px;height:1px;background:#ececec"></div>
<div class="a" style="left:7px;top:727px;width:1080px;height:18px;background-color:#fdfdfd;background-image:linear-gradient(45deg,#ebebeb 25%,transparent 25%,transparent 75%,#ebebeb 75%),linear-gradient(45deg,#ebebeb 25%,transparent 25%,transparent 75%,#ebebeb 75%);background-size:2px 2px;background-position:0 0,1px 1px"></div>
<div class="a" style="left:7px;top:727px;width:114px;height:18px;background:#f0f0f0;border:1px solid #a0a0a0"></div>
<div class="a" style="left:23px;top:728px;width:2px;height:16px;background:#a0a0a0"></div>
<div class="a" style="left:1087px;top:727px;width:17px;height:18px;background:#f0f0f0;border:1px solid #a0a0a0"></div>
<div class="a" style="left:1104px;top:726px;width:18px;height:19px;background:#c9c9c9"></div>
<div class="a" style="left:6px;top:745px;width:1117px;height:1px;background:#505049"></div>
<svg width="1129" height="750" viewBox="0 0 1129 750"><rect x="991.7" y="8.1" width="4.5" height="5.4" rx="0.8" fill="#fff"/><path d="M997,8.1L1005.8,5.5V16.4L997,13.5Z" fill="#fff"/><path d="M993.8,14.7h3.2v3.4l-0.3,1.7h-1.7l-1.2,-1.2z" fill="#fff"/><ellipse cx="1007.6" cy="11" rx="0.7" ry="1.1" fill="#fff"/><path d="M1012.7,12.1L1019,11.8V14.3L1014.2,13.8Z" fill="#fff"/><rect x="1018.9" y="6.9" width="2.2" height="11.1" fill="#fff"/><path d="M1021,8.1L1022.6,9.2H1028.4L1030,8.1V16.8L1028.4,15.7H1022.6L1021,16.8Z" fill="#fff"/><rect x="1023" y="11" width="5" height="1" fill="#505049"/><path d="M1041,9.6C1041,7.4 1046.4,7 1046.4,9.8C1046.4,12 1043.7,12.2 1043.7,15" fill="none" stroke="#fff" stroke-width="1.9"/><rect x="1042.7" y="17" width="2" height="2" fill="#fff"/><rect x="1061" y="12.7" width="10" height="1.5" fill="#fff"/><rect x="1083.6" y="8.6" width="9" height="9" fill="none" stroke="#fff" stroke-width="1.3"/><path d="M1105.6,8.4L1114.4,17.2M1114.4,8.4L1105.6,17.2" stroke="#fff" stroke-width="2.2"/><path d="M23.5,57.5h8l3,3v10h-11z" fill="#fff" stroke="#3a3a3a" stroke-width="1.1"/><path d="M31,57.5v3.7h3.5z" fill="#3a3a3a"/><path d="M43.8,63.5A6.7,6.7 0 0 1 55.5,59" fill="none" stroke="#1a9ad6" stroke-width="1.6"/><path d="M57.3,56.8v5.5h-5.3z" fill="#1a9ad6"/><path d="M58.2,64.5A6.7,6.7 0 0 1 46.5,69" fill="none" stroke="#1a9ad6" stroke-width="1.6"/><path d="M44.2,72v-5.5h5.3z" fill="#1a9ad6"/><path d="M240,62h7.3l-3.65,4z" fill="#fff"/><path d="M261.6,57.8h13l-5.3,5.9v7.1h-2.4v-7.1z" fill="#c6c6c6" stroke="#3a3a3a" stroke-width="1.1" stroke-linejoin="miter"/><circle cx="271.8" cy="68" r="3.3" fill="#eaebed"/><path d="M271.8,64.2v7.6M268,68h7.6M269.1,65.3l5.4,5.4M274.5,65.3l-5.4,5.4" stroke="#3a3a3a" stroke-width="1.5"/><circle cx="271.8" cy="68" r="2.5" fill="#3a3a3a"/><ellipse cx="271.8" cy="68" rx="1.4" ry="1" fill="#fff"/><path d="M284.6,57.8h13l-5.3,5.9v7.1h-2.4v-7.1z" fill="#c6c6c6" stroke="#3a3a3a" stroke-width="1.1" stroke-linejoin="miter"/><path d="M289.5,64.5h8l1,1v6h-9z" fill="#3e4a45"/><rect x="291.5" y="65" width="4.5" height="2.2" fill="#ccc"/><rect x="291" y="68.5" width="6" height="3" fill="#fff"/><path d="M314.6,57.8h13l-5.3,5.9v7.1h-2.4v-7.1z" fill="#c6c6c6" stroke="#3a3a3a" stroke-width="1.1" stroke-linejoin="miter"/><path d="M322.8,65.5L328.3,71.3M328.3,65.5L322.8,71.3" stroke="#d23c0e" stroke-width="2"/><path d="M346.3,67.6L355.7,58.2" stroke="#a9abb3" stroke-width="3.6"/><path d="M345.2,68.6L347.6,66.2" stroke="#4f5661" stroke-width="3.6"/><path d="M355.5,58.3L357.3,56.5" stroke="#ff7a12" stroke-width="3.6" stroke-linecap="round"/><path d="M343.0,71.2L344.2,67.2L347.0,70z" fill="#f57c22"/><rect x="343.3" y="70.8" width="15" height="1.2" fill="#f48b4a"/><rect x="357.8" y="70.5" width="1.2" height="1.2" fill="#333"/><path d="M369.3,67.6L378.7,58.2" stroke="#a9abb3" stroke-width="3.6"/><path d="M368.2,68.6L370.6,66.2" stroke="#4f5661" stroke-width="3.6"/><path d="M378.5,58.3L380.3,56.5" stroke="#ff7a12" stroke-width="3.6" stroke-linecap="round"/><path d="M366.0,71.2L367.2,67.2L370.0,70z" fill="#f57c22"/><rect x="366.3" y="70.8" width="15" height="1.2" fill="#f48b4a"/><path d="M376.6,65.3L381.4,71M381.4,65.3L376.6,71" stroke="#e01010" stroke-width="1.9"/><rect x="397" y="57" width="15" height="14" fill="#5b0a5f"/><rect x="397" y="58" width="14" height="13" fill="#444"/><rect x="398" y="60.5" width="12" height="8.7" fill="#fff"/><rect x="398.3" y="58.5" width="7" height="1.3" fill="#fff"/><circle cx="407.2" cy="59.2" r="0.8" fill="#1db34a"/><circle cx="409.5" cy="59.2" r="0.8" fill="#1db34a"/><rect x="398.5" y="62" width="11" height="1" fill="#444"/><rect x="398.5" y="65" width="11" height="1" fill="#444"/><rect x="398.5" y="67" width="11" height="1" fill="#444"/><rect x="426" y="57" width="16" height="14" fill="#46474b"/><rect x="427" y="60.2" width="14" height="9.3" fill="#fff"/><rect x="427" y="63" width="14" height="0.8" fill="#c8c8c8"/><rect x="427" y="66" width="14" height="0.8" fill="#c8c8c8"/><rect x="431" y="60.2" width="0.8" height="9.3" fill="#c8c8c8"/><rect x="427" y="67" width="4.3" height="2.3" fill="#fbe8a8"/><rect x="434" y="64" width="8" height="8" fill="#fff"/><path d="M438.3,64.8v6.6M435,68.1h6.6" stroke="#1e9a3a" stroke-width="2.1"/><rect x="449" y="57" width="16" height="14" fill="#46474b"/><rect x="450" y="60.2" width="14" height="9.3" fill="#fff"/><rect x="450" y="63" width="14" height="0.8" fill="#c8c8c8"/><rect x="450" y="66" width="14" height="0.8" fill="#c8c8c8"/><rect x="454" y="60.2" width="0.8" height="9.3" fill="#c8c8c8"/><rect x="450" y="67" width="4.3" height="2.3" fill="#fbe8a8"/><path d="M457,65.5l3,3l6,-5.5v4l-6,5.5l-4,-3z" fill="#fff"/><path d="M457.5,67.5l2.8,2.8l5.2,-5" fill="none" stroke="#1e9a3a" stroke-width="2.3"/><rect x="472" y="57" width="16" height="14" fill="#46474b"/><rect x="473" y="60.2" width="14" height="9.3" fill="#fff"/><rect x="473" y="63" width="14" height="0.8" fill="#c8c8c8"/><rect x="473" y="66" width="14" height="0.8" fill="#c8c8c8"/><rect x="477" y="60.2" width="0.8" height="9.3" fill="#c8c8c8"/><rect x="473" y="60.5" width="4.3" height="8.8" fill="#fbe8a8"/><rect x="473" y="63" width="4.3" height="0.8" fill="#c8c8c8"/><rect x="473" y="66" width="4.3" height="0.8" fill="#c8c8c8"/><path d="M478.5,64.8h9.5v7h-9.5z" fill="#d33b0b"/><path d="M481,65v-2.3a2.2,2.2 0 0 1 4.5,0v2.3" fill="none" stroke="#d33b0b" stroke-width="1.6"/><rect x="477.5" y="66.8" width="3" height="1" fill="#fff"/><rect x="477.5" y="68.8" width="3" height="1" fill="#fff"/><rect x="495" y="57" width="16" height="14" fill="#46474b"/><rect x="496" y="60.2" width="14" height="9.3" fill="#fff"/><rect x="496" y="63" width="14" height="0.8" fill="#c8c8c8"/><rect x="496" y="66" width="14" height="0.8" fill="#c8c8c8"/><rect x="500" y="60.2" width="0.8" height="9.3" fill="#c8c8c8"/><rect x="496" y="60.5" width="4.3" height="8.8" fill="#fbe8a8"/><rect x="496" y="63" width="4.3" height="0.8" fill="#c8c8c8"/><rect x="496" y="66" width="4.3" height="0.8" fill="#c8c8c8"/><rect x="501" y="62.5" width="11" height="10.5" fill="#fff"/><circle cx="506.5" cy="67.6" r="2.8" fill="#fff" stroke="#1a73e8" stroke-width="2.4"/><path d="M506.5,62.8v1.8M506.5,70.6v1.8M501.7,67.6h1.8M509.5,67.6h1.8M503.1,64.2l1.2,1.2M508.7,69.8l1.2,1.2M509.9,64.2l-1.2,1.2M503.1,71l1.2,-1.2" stroke="#1a73e8" stroke-width="2"/><rect x="518" y="57" width="16" height="14" fill="#46474b"/><rect x="519" y="60.2" width="14" height="9.3" fill="#fff"/><rect x="519" y="63" width="14" height="0.8" fill="#c8c8c8"/><rect x="519" y="66" width="14" height="0.8" fill="#c8c8c8"/><rect x="523" y="60.2" width="0.8" height="9.3" fill="#c8c8c8"/><rect x="519" y="60.5" width="4.3" height="8.8" fill="#fbe8a8"/><rect x="519" y="63" width="4.3" height="0.8" fill="#c8c8c8"/><rect x="519" y="66" width="4.3" height="0.8" fill="#c8c8c8"/><rect x="524" y="63.5" width="10" height="9" fill="#fff"/><path d="M524.5,64.5h7.5l1.5,1.5v6h-9z" fill="#46474b"/><rect x="526.5" y="65" width="4" height="2" fill="#ccc"/><rect x="526" y="68.5" width="6" height="3" fill="#fff"/><rect x="541" y="57" width="16" height="14" fill="#46474b"/><rect x="542" y="60.2" width="14" height="9.3" fill="#fff"/><rect x="542" y="63" width="14" height="0.8" fill="#c8c8c8"/><rect x="542" y="66" width="14" height="0.8" fill="#c8c8c8"/><rect x="546" y="60.2" width="0.8" height="9.3" fill="#c8c8c8"/><rect x="542" y="60.5" width="4.3" height="8.8" fill="#fbe8a8"/><rect x="542" y="63" width="4.3" height="0.8" fill="#c8c8c8"/><rect x="542" y="66" width="4.3" height="0.8" fill="#c8c8c8"/><rect x="546" y="61.5" width="11" height="11.5" fill="#fff"/><path d="M548.3,63.2A4.6,4.6 0 1 1 548.2,69.8" fill="none" stroke="#1a73e8" stroke-width="1.4"/><path d="M546.8,61.2v5h5z" fill="#1a73e8"/><path d="M16,125.8h12l-4.2,5.5v7l-3.3,0.8v-7.8z" fill="#a9abb8"/><path d="M88,125.8h12l-4.2,5.5v7l-3.3,0.8v-7.8z" fill="#a9abb8"/><path d="M160,125.8h12l-4.2,5.5v7l-3.3,0.8v-7.8z" fill="#a9abb8"/><path d="M310,125.8h12l-4.2,5.5v7l-3.3,0.8v-7.8z" fill="#a9abb8"/><path d="M400,125.8h12l-4.2,5.5v7l-3.3,0.8v-7.8z" fill="#a9abb8"/><path d="M550,125.8h12l-4.2,5.5v7l-3.3,0.8v-7.8z" fill="#a9abb8"/><path d="M700,125.8h12l-4.2,5.5v7l-3.3,0.8v-7.8z" fill="#a9abb8"/><path d="M772,125.8h12l-4.2,5.5v7l-3.3,0.8v-7.8z" fill="#a9abb8"/><path d="M844,125.8h12l-4.2,5.5v7l-3.3,0.8v-7.8z" fill="#a9abb8"/><path d="M916,125.8h12l-4.2,5.5v7l-3.3,0.8v-7.8z" fill="#a9abb8"/><path d="M988,125.8h12l-4.2,5.5v7l-3.3,0.8v-7.8z" fill="#a9abb8"/><path d="M1060,125.8h12l-4.2,5.5v7l-3.3,0.8v-7.8z" fill="#a9abb8"/><path d="M1112,602h7v13h-7z" fill="#1e7145"/><path d="M1113,603.5h5v10h-5z" fill="none" stroke="#fff" stroke-width="0.8"/><path d="M1113,606h5M1113,608.5h5M1113,611h5M1115.5,603.5v10" stroke="#fff" stroke-width="0.7"/><path d="M1105,603l8,-1.8v15.3l-8,-1.8z" fill="#1d7245"/><path d="M1106.8,605.3l3.5,6.5M1110.3,605.3l-3.5,6.5" stroke="#fff" stroke-width="1.5"/><rect x="1109.7" y="624.8" width="8.0" height="1.2" fill="#000"/><path d="M1110.0,631.0L1113.7,626.3L1117.4,631.0z" fill="#000"/><path d="M1110.0,646.8L1113.7,642.3L1117.4,646.8z" fill="#000"/><rect x="1109.7" y="647.8" width="8.0" height="1.2" fill="#000"/><path d="M1110.0,666.0L1113.7,661.8L1117.4,666.0z" fill="#000"/><path d="M1110.0,679.6L1113.7,684.2L1117.4,679.6z" fill="#000"/><rect x="1109.7" y="696.7" width="8.0" height="1.2" fill="#000"/><path d="M1110.0,698.3L1113.7,703.0L1117.4,698.3z" fill="#000"/><path d="M1110.0,714.3L1113.7,718.6L1117.4,714.3z" fill="#000"/><rect x="1109.7" y="719.6" width="8.0" height="1.2" fill="#000"/><path d="M16.2,731.8v7.2l-4.6,-3.6z" fill="#000"/><path d="M1094,731.8v7.2l4.6,-3.6z" fill="#000"/></svg>
</body></html>
